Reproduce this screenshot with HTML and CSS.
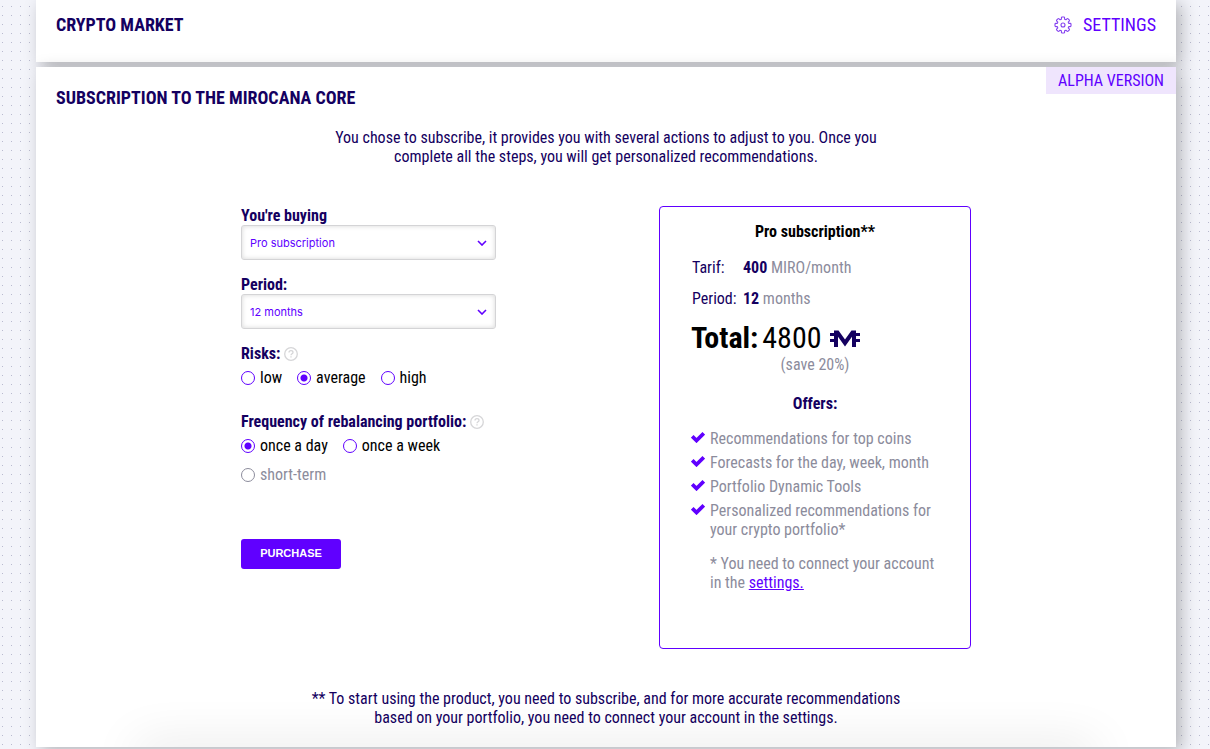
FILE: index.html
```html
<!DOCTYPE html>
<html lang="en">
<head>
<meta charset="utf-8">
<title>Crypto Market</title>
<link rel="stylesheet" href="styles.css">
</head>
<body>
<header class="panel topbar">
  <h1 class="heading">CRYPTO MARKET</h1>
  <a class="settings" href="#settings">
    <svg class="gear" viewBox="0 0 18 18" aria-hidden="true"><path d="M7.400 3.300V1.800Q7.400 1 8.200 1h1.600q.8 0 .8.800v1.500l1.300.5 1-1q.6-.6 1.200 0l1.100 1.100q.6.600 0 1.200l-1 1 .5 1.300h1.500q.8 0 .8.800v1.600q0 .8-.8.800h-1.500l-.5 1.300 1 1q.6.600 0 1.200l-1.100 1.100q-.6.600-1.200 0l-1-1-1.300.5v1.500q0 .8-.8.800H8.200q-.8 0-.8-.8v-1.500l-1.300-.5-1 1q-.6.600-1.200 0l-1.100-1.100q-.6-.6 0-1.200l1-1-.5-1.300H1.800Q1 10.600 1 9.800V8.200q0-.8.8-.8h1.500l.5-1.300-1-1q-.6-.6 0-1.200l1.100-1.100q.6-.6 1.200 0l1 1z"/><circle cx="9" cy="9" r="2"/></svg>
    SETTINGS
  </a>
</header>

<main class="panel subscription">
  <div class="title-row">
    <h2 class="heading">SUBSCRIPTION TO THE MIROCANA CORE</h2>
    <span class="alpha">ALPHA VERSION</span>
  </div>
  <p class="intro">You chose to subscribe, it provides you with several actions to adjust to you. Once you complete all the steps, you will get personalized recommendations.</p>

  <div class="columns">
    <form class="order">
      <div class="field">
        <label class="label" for="product">You're buying</label>
        <select class="select" id="product"><option>Pro subscription</option></select>
      </div>
      <div class="field">
        <label class="label" for="period">Period:</label>
        <select class="select" id="period"><option>12 months</option></select>
      </div>
      <fieldset class="group">
        <legend class="label legend">Risks:
          <svg class="help" viewBox="0 0 14 14" aria-hidden="true"><circle cx="7" cy="7" r="6.300"/><path d="M5 5.600C5 4.300 5.900 3.700 7 3.700s2 .7 2 1.700c0 1.300-2 1.500-2 2.900M7 9.300v1.200"/></svg>
        </legend>
        <div class="options">
          <label class="option"><input class="radio" type="radio" name="risk">low</label>
          <label class="option"><input class="radio" type="radio" name="risk" checked>average</label>
          <label class="option"><input class="radio" type="radio" name="risk">high</label>
        </div>
      </fieldset>
      <fieldset class="group">
        <legend class="label legend">Frequency of rebalancing portfolio:
          <svg class="help" viewBox="0 0 14 14" aria-hidden="true"><circle cx="7" cy="7" r="6.300"/><path d="M5 5.600C5 4.300 5.900 3.700 7 3.700s2 .7 2 1.700c0 1.300-2 1.500-2 2.900M7 9.300v1.200"/></svg>
        </legend>
        <div class="options">
          <label class="option"><input class="radio" type="radio" name="freq" checked>once a day</label>
          <label class="option"><input class="radio" type="radio" name="freq">once a week</label>
          <label class="option disabled"><input class="radio" type="radio" name="freq" disabled>short-term</label>
        </div>
      </fieldset>
      <button class="purchase" type="button">PURCHASE</button>
    </form>

    <section class="plan">
      <h3 class="plan-title">Pro subscription**</h3>
      <dl class="facts">
        <dt>Tarif:</dt><dd><b>400</b> MIRO/month</dd>
        <dt>Period:</dt><dd><b>12</b> months</dd>
      </dl>
      <p class="total">
        <b>Total:</b>
        <span>4800</span>
        <svg class="coin" viewBox="0 0 30 18" aria-label="MIRO"><path class="letter" d="M6 18V3.500h1.500L15 14l7.500-10.500H24V18"/><path class="bars" d="M0 5.500h6M0 11.500h6M24 5.500h6M24 11.500h6"/></svg>
      </p>
      <p class="save">(save 20%)</p>
      <h4 class="offers-title">Offers:</h4>
      <ul class="offers">
        <li><svg class="check" viewBox="0 0 14 12" aria-hidden="true"><path d="m1.200 5.300 4.300 4.200 7.300-7.200"/></svg>Recommendations for top coins</li>
        <li><svg class="check" viewBox="0 0 14 12" aria-hidden="true"><path d="m1.200 5.300 4.300 4.200 7.300-7.200"/></svg>Forecasts for the day, week, month</li>
        <li><svg class="check" viewBox="0 0 14 12" aria-hidden="true"><path d="m1.200 5.300 4.300 4.200 7.300-7.200"/></svg>Portfolio Dynamic Tools</li>
        <li><svg class="check" viewBox="0 0 14 12" aria-hidden="true"><path d="m1.200 5.300 4.300 4.200 7.300-7.200"/></svg>Personalized recommendations for your crypto portfolio*</li>
      </ul>
      <p class="note">* You need to connect your account in the <a href="#settings">settings.</a></p>
    </section>
  </div>

  <p class="footnote">** To start using the product, you need to subscribe, and for more accurate recommendations based on your portfolio, you need to connect your account in the settings.</p>
</main>
</body>
</html>
```
FILE: styles.css
```css
* { box-sizing: border-box; }

body {
  margin: 0;
  padding: 0 34px 2px 36px;
  background: conic-gradient(from 90deg at 8px 8px, #b9bacf 90deg, transparent 0) 3px 7px / 9px 9px #f3f4fa;
  font: 16px/19px "Roboto Condensed", Roboto, sans-serif;
  color: #140060;
}

h1, h2, h3, h4, p, dl, dd, ul { margin: 0; padding: 0; }

.panel {
  position: relative;
  background: #fff;
  box-shadow: 5px 4px 16px rgba(0, 0, 0, .27);
}

.heading { font-size: 18px; line-height: 22px; font-weight: 700; }

.topbar {
  display: flex;
  justify-content: space-between;
  align-items: flex-start;
  padding: 14px 20px 26px;
}

.settings {
  display: flex;
  align-items: center;
  gap: 11px;
  font-size: 18px;
  line-height: 22px;
  color: #6000ff;
  text-decoration: none;
}

.gear { width: 18px; height: 18px; fill: none; stroke: #8440f0; stroke-width: 1.1; stroke-linejoin: round; }

.subscription { margin-top: 5px; padding-bottom: 20px; overflow: hidden; }

.subscription::after {
  content: "";
  position: absolute;
  left: 100px;
  right: 80px;
  top: 100%;
  height: 20px;
  box-shadow: 0 0 50px rgba(0, 0, 0, .14);
}

.title-row { display: flex; justify-content: space-between; align-items: flex-start; padding-left: 20px; }
.title-row .heading { padding-top: 20px; }

.alpha { padding: 4px 12px; background: #efe5fd; color: #6000ff; }

.intro { max-width: 570px; margin: 19px auto 40px; text-align: center; }

.columns { display: flex; justify-content: center; align-items: stretch; gap: 163px; }

.order { width: 255px; }
.field { margin-bottom: 15px; }
.label { display: block; font-weight: 700; }

.select {
  display: block;
  width: 100%;
  height: 35px;
  padding: 0 8px;
  border: 1px solid #d4d4d6;
  border-radius: 3px;
  appearance: none;
  background: #fff url("data:image/svg+xml,%3Csvg xmlns='http://www.w3.org/2000/svg' viewBox='0 0 10 6'%3E%3Cpath d='m1 1 4 4 4-4' fill='none' stroke='%236000ff' stroke-width='1.600'/%3E%3C/svg%3E") right 8px center / 10px 6px no-repeat;
  box-shadow: inset 0 0 5px rgba(0, 0, 0, .16);
  font: 11px/16px Inter, sans-serif;
  color: #6000ff;
}

.group { margin: 0 0 25px; padding: 0; border: 0; min-width: 0; }
.legend { display: flex; align-items: center; gap: 4px; padding: 0; margin-bottom: 5px; }
.help { width: 14px; height: 14px; fill: none; stroke: #d6d6d8; stroke-width: 1.3; }

.options { display: flex; flex-wrap: wrap; gap: 10px 15px; }
.option { display: flex; align-items: center; gap: 5px; color: #000; }
.option.disabled { color: #8c8c9c; }

.radio {
  appearance: none;
  width: 14px;
  height: 14px;
  margin: 0;
  border: 1px solid #6000ff;
  border-radius: 50%;
  background: #fff;
}
.radio:checked { background: radial-gradient(circle, #6000ff 3px, transparent 4px); }
.radio:disabled { border-color: #8c8c9c; }

.purchase {
  width: 100px;
  height: 30px;
  margin-top: 30px;
  padding: 0 0 2px;
  border: 0;
  border-radius: 3px;
  background: #6000ff;
  color: #fff;
  font: 700 11px/14px "Liberation Sans", Arial, sans-serif;
}

.plan {
  width: 312px;
  padding: 15px 31px 56px;
  border: 1px solid #6000ff;
  border-radius: 4px;
  color: #8c8c9c;
}

.plan-title, .offers-title { font-size: 16px; font-weight: 700; text-align: center; }
.plan-title { color: #000; }
.offers-title { margin: 20px 0 16px; color: #140060; }

.facts { display: grid; grid-template-columns: 51px 1fr; row-gap: 12px; margin-top: 17px; padding-left: 1px; }
.facts dt, .facts b { color: #140060; }

.total {
  display: flex;
  align-items: center;
  gap: 4px;
  margin-top: 12px;
  font-size: 30px;
  line-height: 35px;
  color: #000;
}
.coin { width: 30px; height: 18px; margin-left: 4px; fill: none; }
.letter { stroke: #140060; stroke-width: 4; }
.bars { stroke: #140060; stroke-width: 3; }
.save { text-align: center; }

.offers { display: grid; gap: 5px; list-style: none; }
.offers li { display: flex; align-items: flex-start; gap: 5px; }
.check { flex: none; width: 14px; height: 12px; margin-top: 2px; fill: none; stroke: #6000ff; stroke-width: 3.8; }

.note { margin-top: 15px; padding-left: 19px; }
.note a { color: #6000ff; }

.footnote { max-width: 620px; margin: 40px auto 0; text-align: center; }
```
